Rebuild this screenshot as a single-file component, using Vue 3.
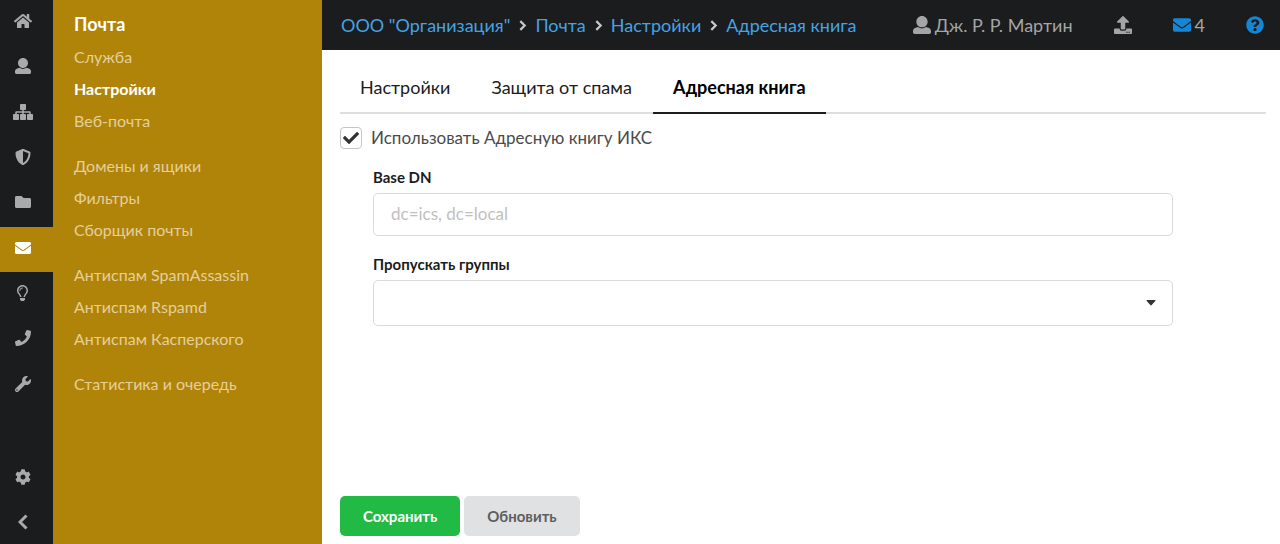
<script setup>
import { ref } from 'vue'

const icons = {
  home: { w: 576, d: 'M280.37 148.26L96 300.11V464a16 16 0 0 0 16 16l112.06-.29a16 16 0 0 0 15.92-16V368a16 16 0 0 1 16-16h64a16 16 0 0 1 16 16v95.64a16 16 0 0 0 16 16.05L464 480a16 16 0 0 0 16-16V300L295.67 148.26a12.19 12.19 0 0 0-15.3 0zM571.6 251.47L488 182.56V44.05a12 12 0 0 0-12-12h-56a12 12 0 0 0-12 12v72.61L318.47 43a48 48 0 0 0-61 0L4.34 251.47a12 12 0 0 0-1.6 16.9l25.5 31A12 12 0 0 0 45.15 301l235.22-193.74a12.19 12.19 0 0 1 15.3 0L530.9 301a12 12 0 0 0 16.9-1.6l25.5-31a12 12 0 0 0-1.7-16.93z' },
  user: { w: 512, d: 'M256 0c88.366 0 160 71.634 160 160s-71.634 160-160 160S96 248.366 96 160 167.634 0 256 0zm183.283 333.821l-71.313-17.828c-74.923 53.89-165.738 41.864-223.94 0l-71.313 17.828C29.981 344.505 0 382.903 0 426.955V464c0 26.51 21.49 48 48 48h416c26.51 0 48-21.49 48-48v-37.045c0-44.052-29.981-82.45-72.717-93.134z' },
  sitemap: { w: 640, d: 'M616 320h-48v-48c0-22.056-17.944-40-40-40H344v-40h48c13.255 0 24-10.745 24-24V24c0-13.255-10.745-24-24-24H248c-13.255 0-24 10.745-24 24v144c0 13.255 10.745 24 24 24h48v40H112c-22.056 0-40 17.944-40 40v48H24c-13.255 0-24 10.745-24 24v144c0 13.255 10.745 24 24 24h144c13.255 0 24-10.745 24-24V344c0-13.255-10.745-24-24-24h-48v-40h176v40h-48c-13.255 0-24 10.745-24 24v144c0 13.255 10.745 24 24 24h144c13.255 0 24-10.745 24-24V344c0-13.255-10.745-24-24-24h-48v-40h176v40h-48c-13.255 0-24 10.745-24 24v144c0 13.255 10.745 24 24 24h144c13.255 0 24-10.745 24-24V344c0-13.255-10.745-24-24-24z' },
  shield: { w: 512, d: 'M466.5 83.7l-192-80a48.15 48.15 0 0 0-36.9 0l-192 80C27.7 91.1 16 108.6 16 128c0 198.5 114.5 335.7 221.5 380.3 11.8 4.9 25.1 4.9 36.9 0C360.1 472.6 496 349.3 496 128c0-19.4-11.7-36.9-29.5-44.3zM256.1 446.3l-.1-381 175.9 73.3c-3.3 151.4-82.1 261.1-175.8 307.7z' },
  folder: { w: 512, d: 'M464 128H272l-54.63-54.63c-6-6-14.14-9.37-22.63-9.37H48C21.49 64 0 85.49 0 112v288c0 26.51 21.49 48 48 48h416c26.51 0 48-21.49 48-48V176c0-26.51-21.49-48-48-48z' },
  mail: { w: 512, d: 'M502.3 190.8c3.9-3.1 9.7-.2 9.7 4.7V400c0 26.5-21.5 48-48 48H48c-26.5 0-48-21.5-48-48V195.6c0-5 5.7-7.8 9.7-4.7 22.4 17.4 52.1 39.5 154.1 113.6 21.1 15.4 56.7 47.8 92.2 47.6 35.7.3 72-32.8 92.3-47.6 102-74.1 131.6-96.3 154-113.7zM256 320c23.2.4 56.6-29.2 73.4-41.4 132.7-96.3 142.8-104.7 173.4-128.7 5.8-4.5 9.2-11.5 9.2-18.9v-19c0-26.5-21.5-48-48-48H48c-26.5 0-48 21.5-48 48v19c0 7.4 3.4 14.3 9.2 18.9 30.6 23.9 40.7 32.4 173.4 128.7 16.8 12.2 50.2 41.8 73.4 41.4z' },
  bulb: { w: 352, d: 'M176 80c-52.94 0-96 43.06-96 96 0 8.84 7.16 16 16 16s16-7.16 16-16c0-35.3 28.72-64 64-64 8.84 0 16-7.16 16-16s-7.16-16-16-16zM96.06 459.17c0 3.15.93 6.22 2.68 8.84l24.51 36.84c2.97 4.46 7.97 7.14 13.32 7.14h78.85c5.36 0 10.36-2.68 13.32-7.14l24.51-36.84c1.74-2.62 2.67-5.7 2.68-8.84l.05-43.18H96.02l.04 43.18zM176 0C73.72 0 0 82.97 0 176c0 44.37 16.45 84.85 43.56 115.78 16.64 18.99 42.74 58.8 52.42 92.16v.06h48v-.12c-.01-4.77-.72-9.51-2.15-14.07-5.59-17.81-22.82-64.77-62.17-109.67-20.54-23.43-31.52-53.15-31.61-84.14-.2-73.64 59.67-128 127.95-128 70.58 0 128 57.42 128 128 0 30.97-11.24 60.85-31.65 84.14-39.11 44.61-56.42 91.47-62.1 109.46a47.507 47.507 0 0 0-2.22 14.3v.1h48v-.05c9.68-33.37 35.78-73.18 52.42-92.16C335.55 260.85 352 220.37 352 176 352 78.8 273.2 0 176 0z' },
  phone: { w: 512, d: 'M493.4 24.6l-104-24c-11.3-2.6-22.9 3.3-27.5 13.9l-48 112c-4.2 9.8-1.4 21.3 6.9 28l60.6 49.6c-36 76.7-98.9 140.5-177.2 177.2l-49.6-60.6c-6.8-8.3-18.2-11.1-28-6.9l-112 48C3.9 366.5-2 378.1.6 389.4l24 104C27.1 504.2 36.7 512 48 512c256.1 0 464-207.5 464-464 0-11.2-7.7-20.9-18.6-23.4z' },
  wrench: { w: 512, d: 'M507.73 109.1c-2.24-9.03-13.54-12.09-20.12-5.51l-74.36 74.36-67.88-11.31-11.31-67.88 74.36-74.36c6.62-6.62 3.43-17.9-5.66-20.16-47.38-11.74-99.55.91-136.58 37.93-39.64 39.64-50.55 97.1-34.05 147.2L18.74 402.76c-24.99 24.99-24.99 65.51 0 90.5 24.99 24.99 65.51 24.99 90.5 0l213.21-213.21c50.12 16.71 107.47 5.68 147.37-34.22 37.07-37.07 49.7-89.32 37.91-136.73zM64 472c-13.25 0-24-10.75-24-24 0-13.26 10.75-24 24-24s24 10.74 24 24c0 13.25-10.75 24-24 24z' },
  cog: { w: 512, d: 'M487.4 315.7l-42.6-24.6c4.3-23.2 4.3-47 0-70.2l42.6-24.6c4.9-2.8 7.1-8.6 5.5-14-11.1-35.6-30-67.8-54.7-94.6-3.8-4.1-10-5.1-14.8-2.3L380.8 110c-17.9-15.4-38.5-27.3-60.8-35.1V25.8c0-5.6-3.9-10.5-9.4-11.7-36.7-8.2-74.3-7.8-109.2 0-5.5 1.2-9.4 6.1-9.4 11.7V75c-22.2 7.9-42.8 19.8-60.8 35.1L88.7 85.5c-4.9-2.8-11-1.9-14.8 2.3-24.7 26.7-43.6 58.9-54.7 94.6-1.7 5.4.6 11.2 5.5 14L67.3 221c-4.3 23.2-4.3 47 0 70.2l-42.6 24.6c-4.9 2.8-7.1 8.6-5.5 14 11.1 35.6 30 67.8 54.7 94.6 3.8 4.1 10 5.1 14.8 2.3l42.6-24.6c17.9 15.4 38.5 27.3 60.8 35.1v49.2c0 5.6 3.9 10.5 9.4 11.7 36.7 8.2 74.3 7.8 109.2 0 5.5-1.2 9.4-6.1 9.4-11.7v-49.2c22.2-7.9 42.8-19.8 60.8-35.1l42.6 24.6c4.9 2.8 11 1.9 14.8-2.3 24.7-26.7 43.6-58.9 54.7-94.6 1.5-5.5-.7-11.3-5.6-14.1zM256 336c-44.1 0-80-35.9-80-80s35.9-80 80-80 80 35.9 80 80-35.9 80-80 80z' },
  upload: { w: 512, d: 'M296 384h-80c-13.3 0-24-10.7-24-24V192h-87.7c-17.8 0-26.7-21.5-14.1-34.1L242.3 5.7c7.5-7.5 19.8-7.5 27.3 0l152.2 152.2c12.6 12.6 3.7 34.1-14.1 34.1H320v168c0 13.3-10.7 24-24 24zm216-8v112c0 13.3-10.7 24-24 24H24c-13.3 0-24-10.7-24-24V376c0-13.3 10.7-24 24-24h136v8c0 30.9 25.1 56 56 56h80c30.9 0 56-25.1 56-56v-8h136c13.3 0 24 10.7 24 24zm-124 88c0-11-9-20-20-20s-20 9-20 20 9 20 20 20 20-9 20-20zm64 0c0-11-9-20-20-20s-20 9-20 20 9 20 20 20 20-9 20-20z' },
  help: { w: 512, d: 'M504 256c0 136.997-111.043 248-248 248S8 392.997 8 256C8 119.083 119.043 8 256 8s248 111.083 248 248zM262.655 90c-54.497 0-89.255 22.957-116.549 63.758-3.536 5.286-2.353 12.415 2.715 16.258l34.699 26.31c5.205 3.947 12.621 3.008 16.665-2.122 17.864-22.658 30.113-35.797 57.303-35.797 20.429 0 45.698 13.148 45.698 32.958 0 14.976-12.363 22.667-32.534 33.976C247.128 238.528 216 254.941 216 296v4c0 6.627 5.373 12 12 12h56c6.627 0 12-5.373 12-12v-1.333c0-28.462 83.186-29.647 83.186-106.667 0-58.002-60.165-102-116.531-102zM256 338c-25.365 0-46 20.635-46 46 0 25.364 20.635 46 46 46s46-20.636 46-46c0-25.365-20.635-46-46-46z' },
  check: { w: 512, d: 'M173.898 439.404l-166.4-166.4c-9.997-9.997-9.997-26.206 0-36.204l36.203-36.204c9.997-9.998 26.207-9.998 36.204 0L192 312.69 432.095 72.596c9.997-9.997 26.207-9.997 36.204 0l36.203 36.204c9.997 9.997 9.997 26.206 0 36.204l-294.4 294.401c-9.998 9.997-26.207 9.997-36.204-.001z' },
}

const sections = [
  { icon: 'home', label: 'Главная' },
  { icon: 'user', label: 'Пользователи' },
  { icon: 'sitemap', label: 'Сеть' },
  { icon: 'shield', label: 'Защита' },
  { icon: 'folder', label: 'Файлы' },
  { icon: 'mail', label: 'Почта', active: true },
  { icon: 'bulb', label: 'Jabber' },
  { icon: 'phone', label: 'Телефония' },
  { icon: 'wrench', label: 'Обслуживание' },
]

const menu = [
  ['Служба', 'Настройки', 'Веб-почта'],
  ['Домены и ящики', 'Фильтры', 'Сборщик почты'],
  ['Антиспам SpamAssassin', 'Антиспам Rspamd', 'Антиспам Касперского'],
  ['Статистика и очередь'],
]
const currentItem = 'Настройки'

const crumbs = ['ООО "Организация"', 'Почта', 'Настройки', 'Адресная книга']
const tabs = ['Настройки', 'Защита от спама', 'Адресная книга']
const currentTab = ref('Адресная книга')

const useBook = ref(true)
const baseDn = ref('')
const group = ref('')
</script>

<template>
  <div class="app">
    <nav class="rail" aria-label="Разделы">
      <div class="rail-main">
        <a v-for="s in sections" :key="s.icon" href="#" class="rail-item" :class="{ active: s.active }" :aria-label="s.label">
          <svg class="icon" :viewBox="`0 0 ${icons[s.icon].w} 512`"><path :d="icons[s.icon].d" /></svg>
        </a>
      </div>
      <div class="rail-foot">
        <a href="#" class="rail-item" aria-label="Параметры">
          <svg class="icon" viewBox="0 0 512 512"><path :d="icons.cog.d" /></svg>
        </a>
        <button type="button" class="rail-item" aria-label="Свернуть">
          <svg class="chevron-left" viewBox="0 0 10 16"><path d="M8.500 1.500L2 8l6.500 6.500" /></svg>
        </button>
      </div>
    </nav>

    <aside class="menu">
      <h1>Почта</h1>
      <ul v-for="(items, i) in menu" :key="i">
        <li v-for="item in items" :key="item">
          <a href="#" :class="{ active: item === currentItem }">{{ item }}</a>
        </li>
      </ul>
    </aside>

    <div class="page">
      <header>
        <nav class="crumbs" aria-label="Путь">
          <template v-for="(c, i) in crumbs" :key="c">
            <svg v-if="i" class="chevron" viewBox="0 0 8 10"><path d="M2 1l4 4-4 4" /></svg>
            <a href="#">{{ c }}</a>
          </template>
        </nav>
        <div class="tools">
          <a href="#" class="tool">
            <svg class="icon" viewBox="0 0 512 512"><path :d="icons.user.d" /></svg>
            <span>Дж. Р. Р. Мартин</span>
          </a>
          <button type="button" class="tool" aria-label="Загрузить">
            <svg class="icon" viewBox="0 0 512 512"><path :d="icons.upload.d" /></svg>
          </button>
          <a href="#" class="tool">
            <svg class="icon blue" viewBox="0 0 512 512"><path :d="icons.mail.d" /></svg>
            <span>4</span>
          </a>
          <a href="#" class="tool" aria-label="Справка">
            <svg class="icon blue" viewBox="0 0 512 512"><path :d="icons.help.d" /></svg>
          </a>
        </div>
      </header>

      <main>
        <div class="tabs" role="tablist">
          <button
            v-for="t in tabs" :key="t" type="button" role="tab"
            :aria-selected="t === currentTab" :class="{ active: t === currentTab }"
            @click="currentTab = t"
          >{{ t }}</button>
        </div>

        <form @submit.prevent>
          <label class="check">
            <span class="box">
              <input v-model="useBook" type="checkbox">
              <svg v-if="useBook" viewBox="0 0 512 512"><path :d="icons.check.d" /></svg>
            </span>
            <span>Использовать Адресную книгу ИКС</span>
          </label>

          <div class="fields">
            <div class="field">
              <label for="base-dn">Base DN</label>
              <input id="base-dn" v-model="baseDn" type="text" placeholder="dc=ics, dc=local">
            </div>
            <div class="field">
              <label for="groups">Пропускать группы</label>
              <div class="select">
                <select id="groups" v-model="group"><option value=""></option></select>
                <svg viewBox="0 0 10 6"><path d="M1 0h8q1 0 .3.900L5.700 5q-.7.800-1.400 0L.7.900Q0 0 1 0z" /></svg>
              </div>
            </div>
          </div>

          <div class="actions">
            <button type="submit" class="primary">Сохранить</button>
            <button type="button">Обновить</button>
          </div>
        </form>
      </main>
    </div>
  </div>
</template>

<style>
body {
  margin: 0;
}
</style>

<style scoped>
.app {
  display: flex;
  min-height: 100vh;
  font-family: Lato, "Liberation Sans", sans-serif;
  font-size: 18px;
  line-height: 24px;
  color: #1b1c1d;
  background: #fff;
}
.app *,
.app *::before {
  box-sizing: border-box;
}
a {
  color: inherit;
  text-decoration: none;
}
button,
input,
select {
  font: inherit;
  color: inherit;
  margin: 0;
}
svg {
  display: block;
  fill: currentColor;
}

.rail {
  display: flex;
  flex-direction: column;
  justify-content: space-between;
  width: 53px;
  flex: none;
  background: #1b1c1d;
  color: #a9aaab;
}
.rail-main {
  display: grid;
  grid-auto-rows: 1fr;
  height: 408px;
}
.rail-item {
  display: flex;
  align-items: center;
  justify-content: center;
  width: 100%;
  height: 45px;
  padding: 0 8px 0 0;
  border: 0;
  background: none;
}
.rail-main .rail-item {
  height: auto;
  padding-bottom: 3px;
}
.rail-item.active {
  background: #b08409;
  color: #fff;
}
.rail .icon {
  height: 16px;
}
.chevron-left {
  height: 16px;
  fill: none;
  stroke: currentColor;
  stroke-width: 3;
}

.menu {
  width: 269px;
  flex: none;
  padding: 12px 20px 0 21px;
  background: #b08409;
  color: #e5cf9b;
  font-size: 16px;
}
h1 {
  margin: 0 0 5px;
  font-size: 18px;
  line-height: 24px;
  color: #fff;
}
ul {
  display: grid;
  gap: 1px;
  margin: 0 0 14px;
  padding: 0;
  list-style: none;
}
li a {
  display: block;
  line-height: 31px;
}
li a.active {
  color: #fff;
  font-weight: 700;
}

.page {
  display: flex;
  flex-direction: column;
  flex: 1;
  min-width: 0;
}
header {
  display: flex;
  align-items: center;
  justify-content: space-between;
  min-height: 50px;
  padding: 0 16px 0 19px;
  background: #1b1c1d;
}
.crumbs {
  display: flex;
  align-items: center;
  gap: 8px;
  color: #44a3e3;
}
.chevron {
  width: 9px;
  height: 11px;
  fill: none;
  stroke: #c7c8c8;
  stroke-width: 2;
}
.tools {
  display: flex;
  align-items: center;
  gap: 41px;
  color: #a4a5a5;
}
.tool {
  display: flex;
  align-items: center;
  gap: 4px;
  padding: 0;
  border: 0;
  background: none;
}
.tools .icon {
  height: 18px;
}
.tools .blue {
  color: #1586d3;
}

main {
  display: flex;
  flex-direction: column;
  flex: 1;
  padding: 12px 14px 8px 18px;
}
.tabs {
  display: flex;
  gap: 1px;
  border-bottom: 2px solid #dededf;
}
.tabs button {
  margin-bottom: -2px;
  padding: 13px 20px;
  border: 0;
  border-bottom: 2px solid transparent;
  background: none;
}
.tabs button.active {
  border-color: #1b1c1d;
  color: #000;
  font-weight: 700;
}

form {
  display: flex;
  flex-direction: column;
  flex: 1;
  padding-top: 12px;
}
.check {
  display: flex;
  align-items: center;
  align-self: flex-start;
  gap: 9px;
  color: #4a4b4c;
  font-size: 17px;
}
.box {
  display: grid;
  place-items: center;
}
.box > * {
  grid-area: 1 / 1;
}
.box input {
  appearance: none;
  width: 22px;
  height: 22px;
  border: 1px solid #c4c5c6;
  border-radius: 4px;
}
.box svg {
  width: 16px;
  pointer-events: none;
  color: #333435;
}

.fields {
  display: grid;
  gap: 16px;
  max-width: 833px;
  padding: 15px 0 24px 33px;
}
.field {
  display: grid;
  gap: 4px;
}
.field label {
  font-size: 15px;
  font-weight: 700;
}
.field input,
.field select {
  width: 100%;
  height: 43px;
  padding: 0 17px 2px;
  border: 1px solid #d9dadb;
  border-radius: 5px;
  background: #fff;
  font-size: 17px;
}
.field input::placeholder {
  color: #bfbfbf;
  opacity: 1;
}
.select {
  display: grid;
  align-items: center;
}
.select > * {
  grid-area: 1 / 1;
}
.field select {
  height: 46px;
  appearance: none;
}
.select svg {
  justify-self: end;
  width: 10px;
  margin-right: 17px;
  pointer-events: none;
  color: #333435;
}

.actions {
  display: flex;
  gap: 4px;
  margin-top: auto;
}
.actions button {
  height: 40px;
  padding: 0 23px;
  border: 0;
  border-radius: 5px;
  background: #e0e1e2;
  color: #5d5e5f;
  font-size: 15px;
  font-weight: 700;
}
.actions .primary {
  background: #21ba45;
  color: #fff;
}
</style>
